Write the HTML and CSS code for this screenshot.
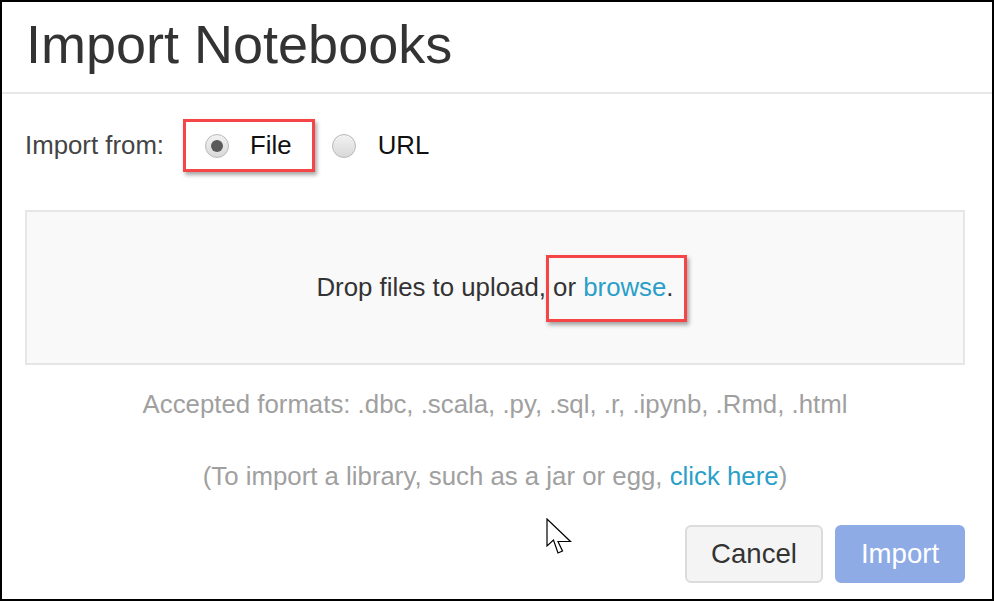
FILE: index.html
```html
<!DOCTYPE html>
<html lang="en">
<head>
<meta charset="utf-8">
<title>Import Notebooks</title>
<link rel="stylesheet" href="styles.css">
</head>
<body>
<div class="dialog">
  <header class="head"><h1 class="title">Import Notebooks</h1></header>
  <div class="content">
    <div class="import-row">
      <span class="lbl">Import from:</span>
      <label class="opt opt-hl"><span class="radio checked"></span><span>File</span></label>
      <label class="opt opt-url"><span class="radio"></span><span>URL</span></label>
    </div>
    <div class="drop">
      <p class="drop-text">Drop files to upload, <span class="hl">or <a class="link" href="#">browse</a>.</span></p>
    </div>
    <p class="formats">Accepted formats: .dbc, .scala, .py, .sql, .r, .ipynb, .Rmd, .html</p>
    <p class="lib">(To import a library, such as a jar or egg, <a class="link" href="#">click here</a>)</p>
    <div class="actions">
      <button class="btn btn-cancel">Cancel</button>
      <button class="btn btn-primary">Import</button>
    </div>
  </div>
  <svg class="cursor" width="28" height="40" viewBox="0 0 28 40">
    <path d="M1 1 V28 L7.5 22 L12 35 L16.5 33 L12 23.5 L24.5 23.5 Z" fill="#fff" stroke="#000" stroke-width="1.2" stroke-linejoin="miter"/>
  </svg>
</div>
</body>
</html>
```
FILE: styles.css
```css
body {
  margin: 0;
  font-family: "Liberation Sans", Arial, sans-serif;
  background: #fff;
}
.dialog {
  position: relative;
  width: 994px;
  height: 601px;
  box-sizing: border-box;
  border: 2px solid #000;
  background: #fff;
  overflow: hidden;
}
.head {
  height: 90px;
  border-bottom: 2px solid #e8e8e8;
  padding-left: 24px;
}
.title {
  margin: 0;
  font-size: 54px;
  font-weight: normal;
  line-height: 85px;
  color: #333;
}
.content {
  padding: 25px 27px 0 23px;
}
.import-row {
  display: flex;
  align-items: center;
  height: 53px;
  font-size: 25.8px;
  padding-left: 0;
}
.lbl {
  color: #444;
  margin-right: 19px;
}
.opt {
  display: flex;
  align-items: center;
  gap: 21px;
  color: #111;
}
.opt-hl {
  box-sizing: border-box;
  height: 53px;
  border: 3px solid #f44646;
  padding: 0 20px 0 19px;
  box-shadow: 2px 3px 4px rgba(0, 0, 0, 0.35);
  margin-right: 17px;
}
.opt-url {
  gap: 22px;
}
.radio {
  width: 24px;
  height: 24px;
  box-sizing: border-box;
  border: 1px solid #b8b8b8;
  border-radius: 50%;
  background: linear-gradient(#f2f2f2, #d9d9d9);
  display: flex;
  align-items: center;
  justify-content: center;
}
.radio.checked::after {
  content: "";
  width: 12px;
  height: 12px;
  border-radius: 50%;
  background: #5a5a5a;
}
.drop {
  margin-top: 38px;
  height: 155px;
  box-sizing: border-box;
  border: 2px solid #e6e6e6;
  background: #f9f9f9;
  display: flex;
  align-items: center;
  justify-content: center;
}
.drop-text {
  margin: 0;
  font-size: 25.8px;
  color: #333;
}
.hl {
  position: relative;
}
.hl::after {
  content: "";
  position: absolute;
  left: -7px;
  right: -13px;
  top: -18px;
  bottom: -21px;
  border: 3px solid #f44646;
  box-shadow: 2px 3px 4px rgba(0, 0, 0, 0.35);
}
.link {
  color: #2a9fc9;
  text-decoration: none;
}
.formats {
  margin: 25px 0 0;
  text-align: center;
  font-size: 25.8px;
  line-height: 29px;
  color: #a0a0a0;
}
.lib {
  margin: 43px 0 0;
  text-align: center;
  font-size: 25.8px;
  line-height: 29px;
  color: #a0a0a0;
}
.actions {
  display: flex;
  justify-content: flex-end;
  gap: 12px;
  margin-top: 34px;
}
.btn {
  height: 58px;
  font-family: inherit;
  font-size: 27.6px;
  border-radius: 6px;
  border: 2px solid #dcdcdc;
  background: #f4f4f4;
  color: #333;
  padding: 0;
}
.btn-cancel {
  width: 138px;
}
.btn-primary {
  width: 130px;
  background: #8eabe6;
  border-color: #8eabe6;
  color: #fff;
}
.cursor {
  position: absolute;
  left: 544px;
  top: 516px;
}
```
